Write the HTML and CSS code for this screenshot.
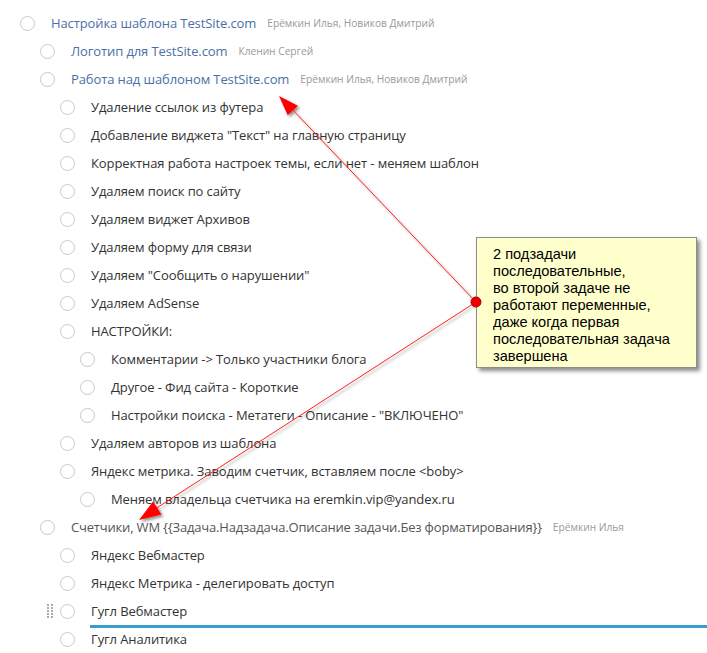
FILE: index.html
```html
<!DOCTYPE html>
<html lang="ru">
<head>
<meta charset="utf-8">
<link rel="stylesheet" href="styles.css">
</head>
<body>
<div class="page">
  <ul class="tree">
    <li>
      <div class="row"><span class="check"></span><span class="title link">Настройка шаблона TestSite.com</span><span class="who">Ерёмкин Илья, Новиков Дмитрий</span></div>
      <ul class="tree">
        <li><div class="row"><span class="check"></span><span class="title link">Логотип для TestSite.com</span><span class="who">Кленин Сергей</span></div></li>
        <li>
          <div class="row"><span class="check"></span><span class="title link">Работа над шаблоном TestSite.com</span><span class="who">Ерёмкин Илья, Новиков Дмитрий</span></div>
          <ul class="tree">
            <li><div class="row"><span class="check"></span><span class="title">Удаление ссылок из футера</span></div></li>
            <li><div class="row"><span class="check"></span><span class="title">Добавление виджета "Текст" на главную страницу</span></div></li>
            <li><div class="row"><span class="check"></span><span class="title">Корректная работа настроек темы, если нет - меняем шаблон</span></div></li>
            <li><div class="row"><span class="check"></span><span class="title">Удаляем поиск по сайту</span></div></li>
            <li><div class="row"><span class="check"></span><span class="title">Удаляем виджет Архивов</span></div></li>
            <li><div class="row"><span class="check"></span><span class="title">Удаляем форму для связи</span></div></li>
            <li><div class="row"><span class="check"></span><span class="title">Удаляем "Сообщить о нарушении"</span></div></li>
            <li><div class="row"><span class="check"></span><span class="title">Удаляем AdSense</span></div></li>
            <li>
              <div class="row"><span class="check"></span><span class="title">НАСТРОЙКИ:</span></div>
              <ul class="tree">
                <li><div class="row"><span class="check"></span><span class="title">Комментарии -&gt; Только участники блога</span></div></li>
                <li><div class="row"><span class="check"></span><span class="title">Другое - Фид сайта - Короткие</span></div></li>
                <li><div class="row"><span class="check"></span><span class="title">Настройки поиска - Метатеги - Описание - "ВКЛЮЧЕНО"</span></div></li>
              </ul>
            </li>
            <li><div class="row"><span class="check"></span><span class="title">Удаляем авторов из шаблона</span></div></li>
            <li>
              <div class="row"><span class="check"></span><span class="title">Яндекс метрика. Заводим счетчик, вставляем после &lt;boby&gt;</span></div>
              <ul class="tree">
                <li><div class="row"><span class="check"></span><span class="title">Меняем владельца счетчика на eremkin.vip@yandex.ru</span></div></li>
              </ul>
            </li>
          </ul>
        </li>
      </ul>
    </li>
  </ul>
  <ul class="tree sub">
    <li>
      <div class="row"><span class="check"></span><span class="title muted">Счетчики, WM {{Задача.Надзадача.Описание задачи.Без форматирования}}</span><span class="who">Ерёмкин Илья</span></div>
      <ul class="tree">
        <li><div class="row"><span class="check"></span><span class="title">Яндекс Вебмастер</span></div></li>
        <li><div class="row"><span class="check"></span><span class="title">Яндекс Метрика - делегировать доступ</span></div></li>
        <li class="dragging"><div class="row"><span class="handle"></span><span class="check"></span><span class="title">Гугл Вебмастер</span></div><div class="drop-line"></div></li>
        <li><div class="row"><span class="check"></span><span class="title">Гугл Аналитика</span></div></li>
      </ul>
    </li>
  </ul>

  <svg class="annot" width="707" height="653" viewBox="0 0 707 653" xmlns="http://www.w3.org/2000/svg">
    <defs>
      <filter id="sh" x="-50%" y="-50%" width="200%" height="200%">
        <feGaussianBlur in="SourceAlpha" stdDeviation="1.5"/>
        <feOffset dx="2" dy="2" result="b"/>
        <feComponentTransfer><feFuncA type="linear" slope="0.45"/></feComponentTransfer>
        <feMerge><feMergeNode/><feMergeNode in="SourceGraphic"/></feMerge>
      </filter>
    </defs>
    <g filter="url(#sh)">
      <line x1="476" y1="302" x2="289" y2="106" stroke="#f22" stroke-width="1"/>
      <line x1="476" y1="302" x2="152" y2="511" stroke="#f22" stroke-width="1"/>
      <polygon points="279,96 287.7,115.3 297.9,105.7" fill="#f00"/>
      <polygon points="139,520 161.5,514.5 153,501.5" fill="#f00"/>
    </g>
  </svg>

  <div class="note">2 подзадачи<br>последовательные,<br>во второй задаче не<br>работают переменные,<br>даже когда первая<br>последовательная задача<br>завершена</div>

  <svg class="dot" width="16" height="16" viewBox="0 0 16 16" xmlns="http://www.w3.org/2000/svg">
    <circle cx="8" cy="8" r="5" fill="#e00" stroke="#a00" stroke-width="1"/>
  </svg>
</div>
</body>
</html>
```
FILE: styles.css
```css
html, body {
  margin: 0;
  padding: 0;
  background: #fff;
}
.page {
  position: relative;
  width: 707px;
  height: 653px;
  overflow: hidden;
  padding-top: 9px;
  box-sizing: border-box;
  font-family: "Open Sans", "Noto Sans", sans-serif;
  font-size: 13px;
  color: #333;
}
.tree {
  list-style: none;
  margin: 0;
  padding: 0 0 0 20px;
}
.page > .tree {
  padding-left: 20px;
}
.page > .tree.sub {
  padding-left: 40px;
}
.tree .tree {
  padding-left: 20px;
}
.row {
  position: relative;
  display: flex;
  align-items: center;
  height: 28px;
  white-space: nowrap;
}
.check {
  flex: none;
  width: 13px;
  height: 13px;
  border: 1px solid #c9c9c9;
  border-radius: 50%;
  background: #fff;
  margin-right: 16px;
}
.title {
  letter-spacing: -0.1px;
}
.link {
  color: #4a70a6;
}
.muted {
  color: #555;
  letter-spacing: -0.18px;
}
.who {
  margin-left: 11px;
  font-size: 10.2px;
  color: #999;
}
.handle {
  position: absolute;
  left: -13px;
  top: 7px;
  width: 6px;
  height: 15px;
  background:
    repeating-linear-gradient(to bottom, #aaa 0 2px, transparent 2px 3px) left top / 2px 15px no-repeat,
    repeating-linear-gradient(to bottom, #aaa 0 2px, transparent 2px 3px) 4px 0 / 2px 15px no-repeat;
}
.drop-line {
  height: 3px;
  background: #3a9cc9;
  margin: 0 -500px -3px 30px;
}
.annot {
  position: absolute;
  left: 0;
  top: 0;
  pointer-events: none;
}
.note {
  position: absolute;
  left: 476px;
  top: 237px;
  width: 203px;
  height: 113px;
  padding: 8px 0 8px 16px;
  background: #ffffcc;
  border: 1px solid #8c8c8c;
  box-shadow: 3px 3px 4px rgba(0,0,0,0.45);
  font-family: "Liberation Sans", Arial, sans-serif;
  font-size: 14.6px;
  line-height: 17px;
  color: #000;
}
.dot {
  position: absolute;
  left: 468px;
  top: 294px;
}
```
